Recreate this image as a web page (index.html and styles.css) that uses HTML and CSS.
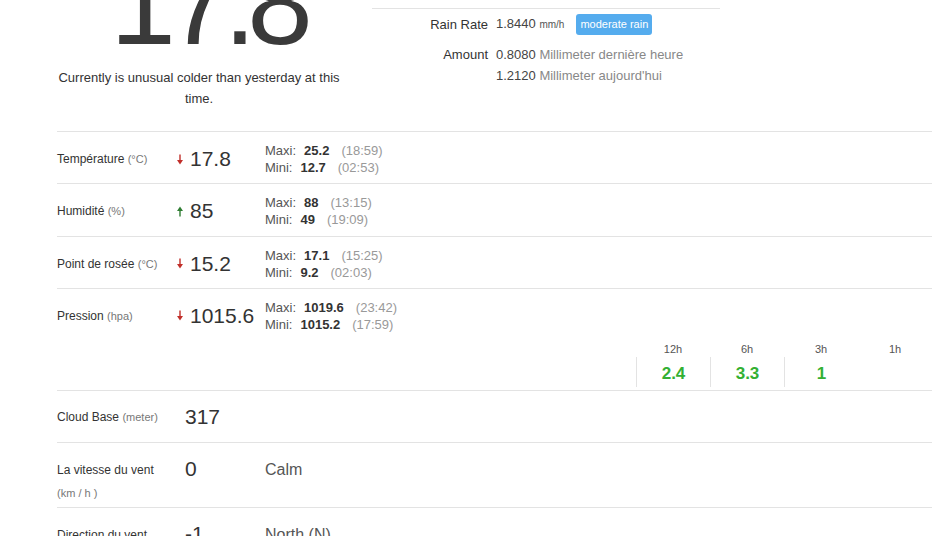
FILE: index.html
```html
<!DOCTYPE html>
<html lang="fr">
<head>
<meta charset="utf-8">
<title>Météo</title>
<link rel="stylesheet" href="styles.css">
</head>
<body>
<div class="page">
  <div class="top">
    <div class="now">
      <div class="big">17.8</div>
      <p class="remark">Currently is unusual colder than yesterday at this time.</p>
    </div>
    <div class="rain">
      <div class="rain-line first">
        <span class="rk">Rain Rate</span>
        <span class="rv">1.8440 <span class="unit">mm/h</span></span>
        <span class="badge">moderate rain</span>
      </div>
      <div class="rain-line second">
        <span class="rk">Amount</span>
        <span class="rv">0.8080 <span class="muted">Millimeter dernière heure</span></span>
      </div>
      <div class="rain-line">
        <span class="rk"></span>
        <span class="rv">1.2120 <span class="muted">Millimeter aujourd'hui</span></span>
      </div>
    </div>
  </div>

  <div class="row">
    <div class="line">
      <div class="label">Température <span class="u">(°C)</span></div>
      <div class="value"><svg class="arrow" width="8" height="11" viewBox="0 0 8 11"><path d="M4 0.5V7" stroke="#c12f2a" stroke-width="1.4"/><path d="M1 6h6l-3 4.5z" fill="#c12f2a"/></svg><span class="num">17.8</span></div>
      <div class="detail">
        <div><span class="mk">Maxi:</span><b>25.2</b><span class="tm">(18:59)</span></div>
        <div><span class="mk">Mini:</span><b>12.7</b><span class="tm">(02:53)</span></div>
      </div>
    </div>
  </div>

  <div class="row">
    <div class="line">
      <div class="label">Humidité <span class="u">(%)</span></div>
      <div class="value"><svg class="arrow" width="8" height="11" viewBox="0 0 8 11"><path d="M4 10.5V4" stroke="#2f7d32" stroke-width="1.4"/><path d="M1 5h6l-3-4.5z" fill="#2f7d32"/></svg><span class="num">85</span></div>
      <div class="detail">
        <div><span class="mk">Maxi:</span><b>88</b><span class="tm">(13:15)</span></div>
        <div><span class="mk">Mini:</span><b>49</b><span class="tm">(19:09)</span></div>
      </div>
    </div>
  </div>

  <div class="row">
    <div class="line">
      <div class="label">Point de rosée <span class="u">(°C)</span></div>
      <div class="value"><svg class="arrow" width="8" height="11" viewBox="0 0 8 11"><path d="M4 0.5V7" stroke="#c12f2a" stroke-width="1.4"/><path d="M1 6h6l-3 4.5z" fill="#c12f2a"/></svg><span class="num">15.2</span></div>
      <div class="detail">
        <div><span class="mk">Maxi:</span><b>17.1</b><span class="tm">(15:25)</span></div>
        <div><span class="mk">Mini:</span><b>9.2</b><span class="tm">(02:03)</span></div>
      </div>
    </div>
  </div>

  <div class="row pressure">
    <div class="line">
      <div class="label">Pression <span class="u">(hpa)</span></div>
      <div class="value"><svg class="arrow" width="8" height="11" viewBox="0 0 8 11"><path d="M4 0.5V7" stroke="#c12f2a" stroke-width="1.4"/><path d="M1 6h6l-3 4.5z" fill="#c12f2a"/></svg><span class="num">1015.6</span></div>
      <div class="detail">
        <div><span class="mk">Maxi:</span><b>1019.6</b><span class="tm">(23:42)</span></div>
        <div><span class="mk">Mini:</span><b>1015.2</b><span class="tm">(17:59)</span></div>
      </div>
    </div>
    <div class="trend">
      <div class="th">12h</div>
      <div class="th">6h</div>
      <div class="th">3h</div>
      <div class="th">1h</div>
      <div class="td">2.4</div>
      <div class="td">3.3</div>
      <div class="td">1</div>
      <div class="td empty"></div>
    </div>
  </div>

  <div class="row single">
    <div class="line">
      <div class="label">Cloud Base <span class="u">(meter)</span></div>
      <div class="value"><span class="num plain">317</span></div>
    </div>
  </div>

  <div class="row tall">
    <div class="line">
      <div class="label">La vitesse du vent <span class="u block">(km / h )</span></div>
      <div class="value"><span class="num plain">0</span></div>
      <div class="desc">Calm</div>
    </div>
  </div>

  <div class="row tall">
    <div class="line">
      <div class="label">Direction du vent <span class="u block">(°)</span></div>
      <div class="value"><span class="num plain">-1</span></div>
      <div class="desc">North (N)</div>
    </div>
  </div>
</div>
</body>
</html>
```

FILE: styles.css
```css
html, body {
  margin: 0;
  padding: 0;
  background: #ffffff;
  overflow: hidden;
}

body {
  font-family: "Liberation Sans", Arial, Helvetica, sans-serif;
  color: #333333;
  font-size: 12px;
}

.page {
  padding-left: 57px;
  width: 875px;
}

/* ---------- top ---------- */
.top {
  display: flex;
  height: 131px;
}

.now {
  width: 290px;
  margin-left: -3px;
  text-align: center;
}

.big {
  font-size: 118px;
  line-height: 118px;
  height: 118px;
  margin-top: -56px;
  letter-spacing: -9px;
  padding-left: 16px;
  color: #3a3a3a;
}

.remark {
  margin: 5px 0 0;
  font-size: 13px;
  line-height: 21px;
  color: #333333;
}

.rain {
  margin-left: 28px;
  margin-top: 8px;
  width: 348px;
  height: 100px;
  border-top: 1px solid #e3e3e3;
  font-size: 13px;
}

.rain-line {
  display: flex;
  align-items: center;
  line-height: 21px;
}

.rain-line.first {
  margin-top: 4px;
}

.rain-line.second {
  margin-top: 9px;
}

.rk {
  width: 116px;
  text-align: right;
  margin-right: 8px;
  color: #333333;
}

.rv {
  color: #444444;
}

.unit {
  font-size: 10px;
  color: #555555;
}

.muted {
  color: #888888;
}

.badge {
  margin-left: 12px;
  background: #55acee;
  color: #ffffff;
  font-size: 11px;
  line-height: 21px;
  padding: 0 4px;
  border-radius: 3px;
}

/* ---------- rows ---------- */
.row {
  border-top: 1px solid #e3e3e3;
  padding: 10px 0 7.25px;
}

.line {
  display: flex;
  align-items: center;
}

.label {
  width: 118px;
  flex: none;
  font-size: 12px;
  color: #333333;
}

.u {
  font-size: 11px;
  color: #777777;
}

.u.block {
  display: block;
}

.value {
  width: 90px;
  flex: none;
  display: flex;
  align-items: center;
}

.arrow {
  margin-left: 1px;
  margin-right: 6px;
  flex: none;
}

.num {
  font-size: 21px;
  line-height: 24px;
  color: #333333;
}

.num.plain {
  margin-left: 10px;
}

.detail {
  font-size: 13px;
  line-height: 17px;
  color: #555555;
}

.detail b {
  color: #333333;
  margin-right: 12px;
}

.mk {
  margin-right: 8px;
}

.tm {
  color: #999999;
}

.pressure {
  padding-bottom: 3.25px;
}

.trend {
  display: grid;
  grid-template-columns: repeat(4, 74px);
  width: 296px;
  margin-left: auto;
  margin-top: 8px;
}

.th {
  text-align: center;
  font-size: 11px;
  line-height: 16px;
  color: #555555;
}

.td {
  text-align: center;
  font-size: 17px;
  font-weight: bold;
  line-height: 30px;
  height: 30px;
  padding-top: 2px;
  box-sizing: border-box;
  color: #33b033;
  border-left: 1px solid #e3e3e3;
}

.td.empty {
  border-left: none;
}

.single {
  padding: 14px 0 13px;
}

.tall {
  padding: 16px 0 2px;
}

.tall .line {
  align-items: flex-start;
}

.tall .label {
  line-height: 23px;
}

.tall .num {
  line-height: 19px;
}

.desc {
  font-size: 16px;
  line-height: 21px;
  color: #555555;
}
```
